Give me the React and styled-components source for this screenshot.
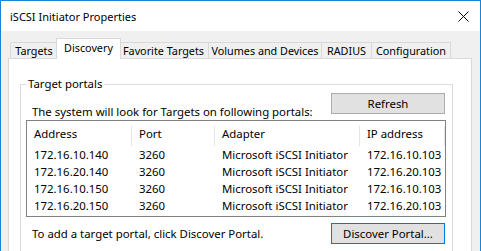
import styled, { createGlobalStyle } from "styled-components";

const GlobalStyle = createGlobalStyle`
    html, body {
        margin: 0;
        padding: 0;
        background: #ffffff;
    }
    body {
        font-family: "Noto Sans", "Liberation Sans", sans-serif;
        font-size: 11.4px;
        color: #000000;
    }
`

const tabs = [
    { label: 'Targets', width: 48 },
    { label: 'Discovery', width: 65 },
    { label: 'Favorite Targets', width: 90 },
    { label: 'Volumes and Devices', width: 113 },
    { label: 'RADIUS', width: 50 },
    { label: 'Configuration', width: 79 },
];

const portals = [
    { address: '172.16.10.140', port: '3260', adapter: 'Microsoft iSCSI Initiator', ip: '172.16.10.103' },
    { address: '172.16.20.140', port: '3260', adapter: 'Microsoft iSCSI Initiator', ip: '172.16.20.103' },
    { address: '172.16.10.150', port: '3260', adapter: 'Microsoft iSCSI Initiator', ip: '172.16.10.103' },
    { address: '172.16.20.150', port: '3260', adapter: 'Microsoft iSCSI Initiator', ip: '172.16.20.103' },
];

const columns = [
    { key: 'address', label: 'Address', width: 105 },
    { key: 'port', label: 'Port', width: 83 },
    { key: 'adapter', label: 'Adapter', width: 145 },
    { key: 'ip', label: 'IP address', width: 85 },
];

const App = () => {
    return (
        <>
            <GlobalStyle />
            <Window>
                <TitleBar>
                    <Title>iSCSI Initiator Properties</Title>
                    <CloseButton>
                        <svg width="11" height="11" viewBox="0 0 11 11">
                            <path d="M0.5 0.5 L10.5 10.5 M10.5 0.5 L0.5 10.5" stroke="#000" strokeWidth="1" fill="none" />
                        </svg>
                    </CloseButton>
                </TitleBar>
                <Body>
                    <TabStrip>
                        {tabs.map((t) => (
                            <Tab key={t.label} $width={t.width} $active={t.label === 'Discovery'}>{t.label}</Tab>
                        ))}
                    </TabStrip>
                    <Panel>
                        <GroupBox>
                            <GroupLabel>Target portals</GroupLabel>
                            <TopRow>
                                <Hint>The system will look for Targets on following portals:</Hint>
                                <Button $gap={6}>Refresh</Button>
                            </TopRow>
                            <List>
                                <HeaderRow>
                                    {columns.map((c) => (
                                        <HeaderCell key={c.key} $width={c.width}>{c.label}</HeaderCell>
                                    ))}
                                </HeaderRow>
                                {portals.map((p) => (
                                    <Row key={p.address}>
                                        {columns.map((c) => (
                                            <Cell key={c.key} $width={c.width}>{p[c.key]}</Cell>
                                        ))}
                                    </Row>
                                ))}
                            </List>
                            <BottomRow>
                                <Hint>To add a target portal, click Discover Portal.</Hint>
                                <Button $focused>Discover Portal...</Button>
                            </BottomRow>
                        </GroupBox>
                    </Panel>
                </Body>
            </Window>
        </>
    );
};

export default App;

const Window = styled.div`
    width: 481px;
    height: 251px;
    box-sizing: border-box;
    border: 1px solid #1883d7;
    border-bottom: none;
    background: #f0f0f0;
    display: flex;
    flex-direction: column;
    overflow: hidden;
`

const TitleBar = styled.div`
    height: 30px;
    flex-shrink: 0;
    background: #ffffff;
    display: flex;
    flex-direction: row;
    align-items: center;
    justify-content: space-between;
    padding-left: 9px;
`

const Title = styled.div`
    font-size: 11px;
`

const CloseButton = styled.div`
    width: 34px;
    height: 30px;
    display: flex;
    align-items: center;
    justify-content: center;
`

const Body = styled.div`
    flex: 1;
    display: flex;
    flex-direction: column;
    padding: 7px 8px 0 7px;
`

const TabStrip = styled.div`
    display: flex;
    flex-direction: row;
    align-items: flex-end;
    padding-left: 2px;
    height: 21px;
    position: relative;
    z-index: 1;
    margin-bottom: -1px;
`

const Tab = styled.div`
    width: ${(p) => p.$width}px;
    height: ${(p) => (p.$active ? '21px' : '17px')};
    box-sizing: border-box;
    margin: 0 ${(p) => (p.$active ? '-2px' : '0')};
    border: 1px solid #d9d9d9;
    border-bottom: ${(p) => (p.$active ? 'none' : '1px solid #d9d9d9')};
    border-left: ${(p) => (p.$active ? '1px solid #d9d9d9' : 'none')};
    background: ${(p) => (p.$active ? '#ffffff' : '#f0f0f0')};
    font-size: 10.8px;
    display: flex;
    justify-content: center;
    align-items: ${(p) => (p.$active ? 'flex-start' : 'center')};
    padding-top: ${(p) => (p.$active ? '1px' : '0')};
    position: relative;
    z-index: ${(p) => (p.$active ? 2 : 1)};
    white-space: nowrap;
    &:first-child {
        border-left: 1px solid #d9d9d9;
    }
`

const Panel = styled.div`
    flex: 1;
    background: #ffffff;
    border: 1px solid #d9d9d9;
    border-bottom: none;
    padding: 25px 18px 0 11px;
`

const GroupBox = styled.div`
    border: 1px solid #dcdcdc;
    padding: 8px 7px 0 5px;
    position: relative;
    height: 200px;
`

const GroupLabel = styled.div`
    position: absolute;
    top: -9px;
    left: 5px;
    padding: 0 2px;
    background: #ffffff;
    line-height: 16px;
`

const TopRow = styled.div`
    display: flex;
    flex-direction: row;
    justify-content: space-between;
    align-items: flex-end;
`

const Hint = styled.div`
    margin-left: 6px;
    line-height: 16px;
`

const Button = styled.div`
    width: 114px;
    height: 21px;
    box-sizing: border-box;
    background: #e1e1e1;
    border: 1px solid ${(p) => (p.$focused ? '#0078d7' : '#adadad')};
    display: flex;
    align-items: center;
    justify-content: center;
    margin-bottom: ${(p) => p.$gap || 0}px;
`

const List = styled.div`
    height: 97px;
    box-sizing: border-box;
    border: 1px solid #828282;
    background: #ffffff;
    width: 420px;
    overflow: hidden;
`

const HeaderRow = styled.div`
    display: flex;
    flex-direction: row;
    height: 25px;
`

const HeaderCell = styled.div`
    width: ${(p) => p.$width}px;
    box-sizing: border-box;
    padding-left: 7px;
    display: flex;
    align-items: center;
    position: relative;
    &::after {
        content: '';
        position: absolute;
        right: 0;
        top: 5px;
        bottom: 0;
        width: 1px;
        background: #e5e5e5;
    }
`

const Row = styled.div`
    display: flex;
    flex-direction: row;
    height: 17px;
    align-items: center;
`

const Cell = styled.div`
    width: ${(p) => p.$width}px;
    box-sizing: border-box;
    padding-left: 7px;
    white-space: nowrap;
`

const BottomRow = styled.div`
    display: flex;
    flex-direction: row;
    justify-content: space-between;
    align-items: center;
    margin-top: 6px;
`
